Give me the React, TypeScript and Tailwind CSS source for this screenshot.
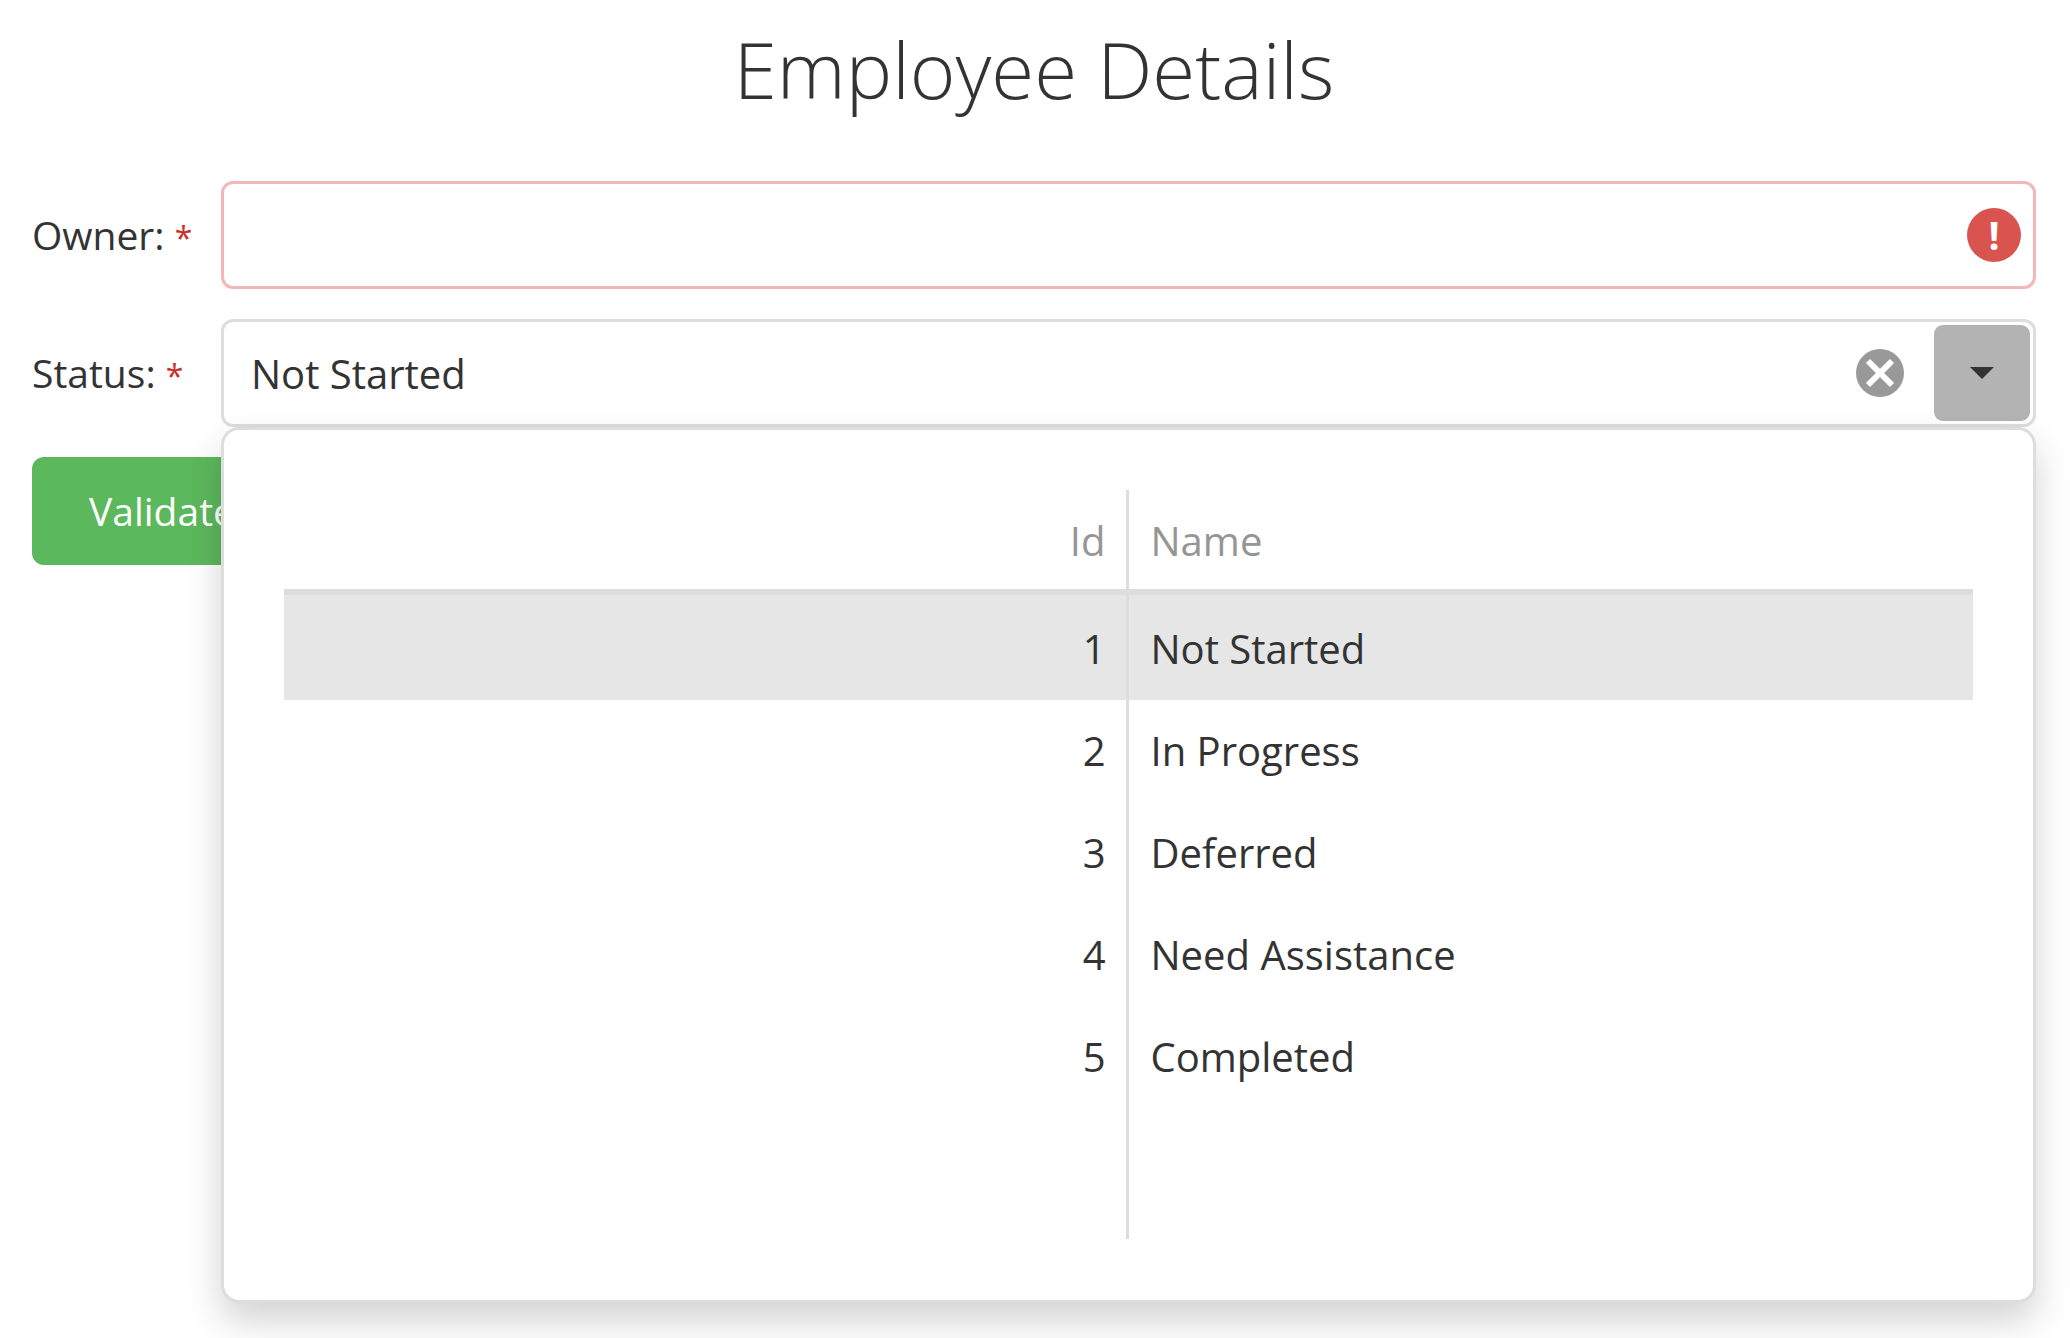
import { useState } from "react";

const statuses = [
  { id: 1, name: "Not Started" },
  { id: 2, name: "In Progress" },
  { id: 3, name: "Deferred" },
  { id: 4, name: "Need Assistance" },
  { id: 5, name: "Completed" },
];

function FieldLabel({ htmlFor, text }: { htmlFor: string; text: string }) {
  return (
    <label htmlFor={htmlFor} className="w-[189px] shrink-0 pt-[2px] text-[39px] leading-[60px] whitespace-pre">
      {text}: <span className="text-[32px] text-[#c9302c]">*</span>
    </label>
  );
}

function StatusTable({ selected, onSelect }: { selected: string; onSelect: (name: string) => void }) {
  return (
    <table className="w-full table-fixed border-separate border-spacing-0">
      <thead>
        <tr className="text-[#959595]">
          <th className="h-[105px] border-r-[3px] border-b-[6px] border-[#ddd] pt-[2px] pr-5 text-right font-normal">
            Id
          </th>
          <th className="h-[105px] border-b-[6px] border-[#ddd] pt-[2px] pl-[22px] text-left font-normal">Name</th>
        </tr>
      </thead>
      <tbody>
        {statuses.map((s) => {
          const tone =
            s.name === selected
              ? "h-[105px] border-b-[3px] border-b-[#e6e6e6] bg-[#e6e6e6] pt-[6px]"
              : "h-[102px]";
          return (
            <tr key={s.id} onClick={() => onSelect(s.name)}>
              <td className={`border-r-[3px] border-r-[#ddd] pr-5 text-right ${tone}`}>{s.id}</td>
              <td className={`pl-[22px] text-left ${tone}`}>{s.name}</td>
            </tr>
          );
        })}
        <tr aria-hidden="true">
          <td className="h-[131px] border-r-[3px] border-r-[#ddd]" />
          <td />
        </tr>
      </tbody>
    </table>
  );
}

export default function App() {
  const [owner, setOwner] = useState("");
  const [status, setStatus] = useState("Not Started");

  return (
    <main className="min-h-screen bg-white pr-[34px] pl-8 font-['Segoe_UI','Open_Sans',sans-serif] text-[40px] leading-[60px] text-[#333]">
      <h1 className="pt-[9px] pb-[52px] text-center text-[78px] leading-[120px] font-light">Employee Details</h1>

      <form className="flex flex-col items-start gap-[30px]" onSubmit={(e) => e.preventDefault()}>
        <div className="flex w-full items-center">
          <FieldLabel htmlFor="owner" text="Owner" />
          <div className="flex h-[108px] flex-1 items-center rounded-xl border-[3px] border-[#f0b8b7] pr-3">
            <input
              id="owner"
              value={owner}
              onChange={(e) => setOwner(e.target.value)}
              aria-invalid="true"
              className="h-full min-w-0 flex-1 bg-transparent px-[27px] outline-none"
            />
            <span
              aria-hidden="true"
              className="flex size-[54px] items-center justify-center rounded-full bg-[#d9534f] text-[39px] leading-[54px] font-bold text-white"
            >
              !
            </span>
          </div>
        </div>

        <div className="flex w-full items-center">
          <FieldLabel htmlFor="status" text="Status" />
          <div className="relative flex h-[108px] min-w-0 flex-1 items-center rounded-xl border-[3px] border-[#ddd] pr-[3px]">
            <input
              id="status"
              role="combobox"
              aria-expanded="true"
              aria-controls="status-list"
              value={status}
              onChange={(e) => setStatus(e.target.value)}
              className="h-full min-w-0 flex-1 bg-transparent px-[27px] outline-none"
            />
            <button type="button" aria-label="Clear" className="mr-[30px]" onClick={() => setStatus("")}>
              <svg viewBox="0 0 48 48" className="block size-12" aria-hidden="true">
                <circle cx="24" cy="24" r="24" fill="#999" />
                <path d="M12 12L36 36M36 12L12 36" stroke="#fff" strokeWidth="6" />
              </svg>
            </button>
            <button
              type="button"
              aria-label="Select"
              className="flex size-24 items-center justify-center rounded-[9px] bg-[#b3b3b3]"
            >
              <svg viewBox="0 0 24 12" className="h-3 w-6" aria-hidden="true">
                <path d="M0 0H24L12 12Z" fill="#333" />
              </svg>
            </button>

            <div
              id="status-list"
              className="absolute top-full -right-[3px] -left-[3px] z-10 mt-[3px] rounded-[18px] border-[3px] border-[#ddd] bg-white p-[60px] pb-[61px] shadow-[0_18px_36px_rgba(0,0,0,0.175)]"
            >
              <StatusTable selected={status} onSelect={setStatus} />
            </div>
          </div>
        </div>

        <button type="submit" className="h-[108px] rounded-xl bg-[#5cb85c] px-[57px] text-[39px] leading-[60px] text-white">
          Validate
        </button>
      </form>
    </main>
  );
}
